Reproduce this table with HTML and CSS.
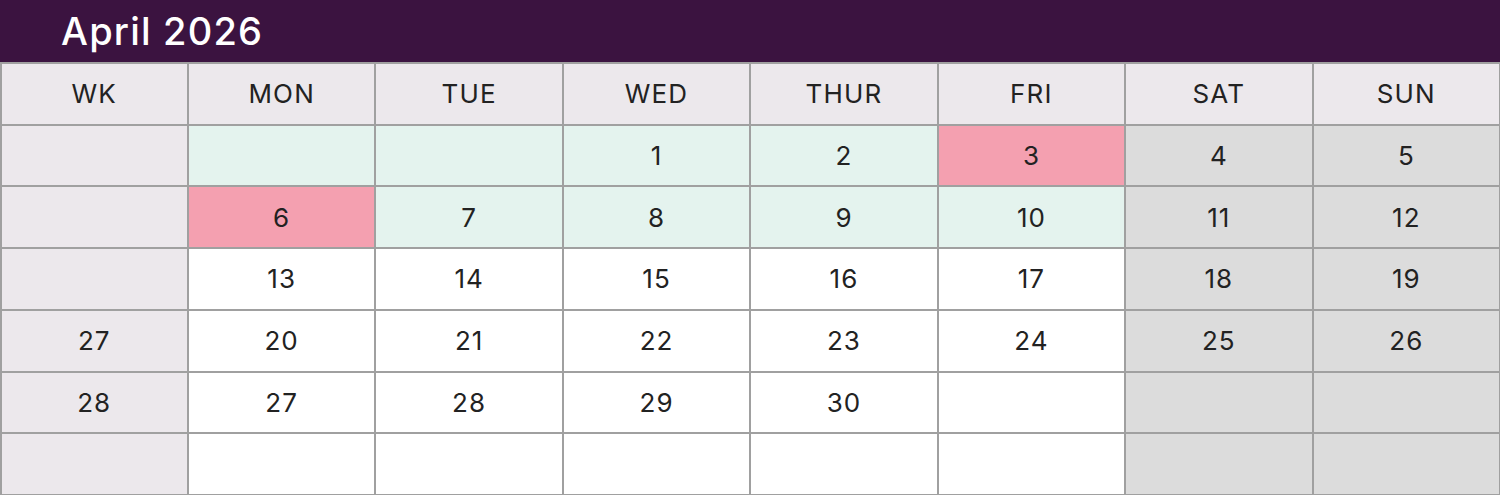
FILE: index.html
```html
<!DOCTYPE html>
<html lang="en">
<head>
<meta charset="utf-8">
<title>April 2026</title>
<link rel="stylesheet" href="styles.css">
</head>
<body>
<div class="cal">
  <div class="title">April 2026</div>
  <div class="grid">
    <div class="c hd">WK</div><div class="c hd">MON</div><div class="c hd">TUE</div><div class="c hd">WED</div><div class="c hd">THUR</div><div class="c hd">FRI</div><div class="c hd">SAT</div><div class="c hd">SUN</div>

    <div class="c wk"></div><div class="c gr"></div><div class="c gr"></div><div class="c gr">1</div><div class="c gr">2</div><div class="c pk">3</div><div class="c we">4</div><div class="c we">5</div>

    <div class="c wk"></div><div class="c pk">6</div><div class="c gr">7</div><div class="c gr">8</div><div class="c gr">9</div><div class="c gr">10</div><div class="c we">11</div><div class="c we">12</div>

    <div class="c wk"></div><div class="c">13</div><div class="c">14</div><div class="c">15</div><div class="c">16</div><div class="c">17</div><div class="c we">18</div><div class="c we">19</div>

    <div class="c wk">27</div><div class="c">20</div><div class="c">21</div><div class="c">22</div><div class="c">23</div><div class="c">24</div><div class="c we">25</div><div class="c we">26</div>

    <div class="c wk">28</div><div class="c">27</div><div class="c">28</div><div class="c">29</div><div class="c">30</div><div class="c"></div><div class="c we"></div><div class="c we"></div>

    <div class="c wk"></div><div class="c"></div><div class="c"></div><div class="c"></div><div class="c"></div><div class="c"></div><div class="c we"></div><div class="c we"></div>
  </div>
</div>
</body>
</html>
```
FILE: styles.css
```css
html, body {
  margin: 0;
  padding: 0;
  background: #ffffff;
}
body {
  font-family: "Inter", "Open Sans", "DejaVu Sans", sans-serif;
  color: #222222;
}
.cal {
  width: 1500px;
  height: 495px;
  display: flex;
  flex-direction: column;
  overflow: hidden;
}
.title {
  height: 62px;
  flex: 0 0 62px;
  background: #3b1340;
  color: #ffffff;
  font-size: 38px;
  font-weight: 500;
  letter-spacing: 1.2px;
  line-height: 62px;
  padding-left: 61px;
  box-sizing: border-box;
}
.grid {
  flex: 1 1 auto;
  display: grid;
  grid-template-columns: repeat(8, 1fr);
  grid-template-rows: repeat(7, 1fr);
  gap: 2px;
  padding: 2px 1px 1px 1.5px;
  background: #a0a0a0;
}
.c {
  background: #ffffff;
  display: flex;
  align-items: center;
  justify-content: center;
  font-size: 26px;
  font-weight: 400;
  letter-spacing: 1px;
  color: #222222;
}
.hd {
  background: #ece8ec;
  letter-spacing: 1.2px;
}
.wk {
  background: #ece8ec;
}
.gr {
  background: #e4f3ee;
}
.pk {
  background: #f4a0b0;
}
.we {
  background: #dcdcdc;
}
```
